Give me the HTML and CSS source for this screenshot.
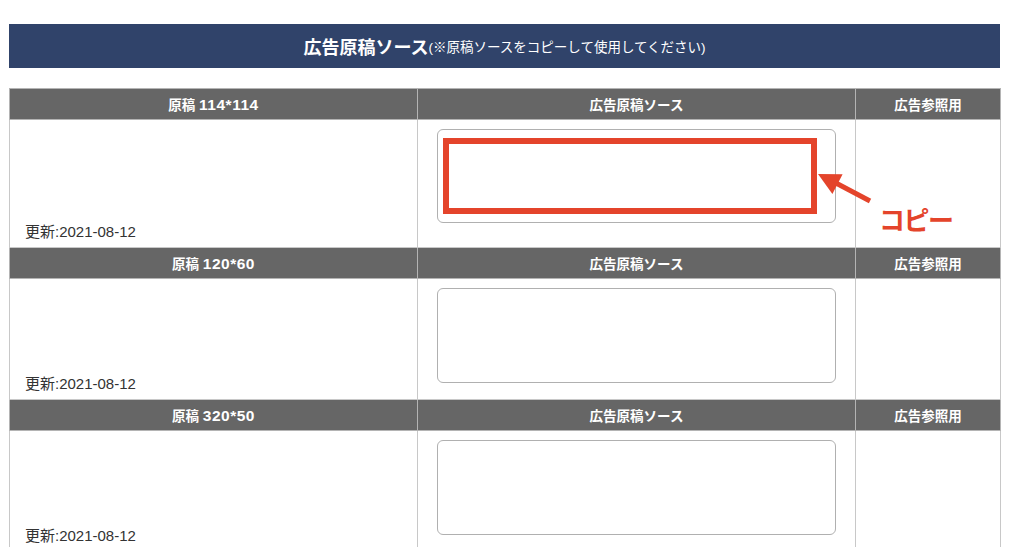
FILE: index.html
```html
<!DOCTYPE html>
<html lang="ja">
<head>
<meta charset="utf-8">
<title>広告原稿ソース</title>
<link rel="stylesheet" href="styles.css">
</head>
<body>
<div class="page">
  <div class="banner">
    <span class="banner-title">広告原稿ソース</span><span class="banner-sub">(※原稿ソースをコピーして使用してください)</span>
  </div>

  <table class="sheet">
    <colgroup>
      <col class="c1"><col class="c2"><col class="c3">
    </colgroup>
    <tr class="head">
      <th>原稿 <span class="num">114*114</span></th><th>広告原稿ソース</th><th>広告参照用</th>
    </tr>
    <tr class="body r1">
      <td class="date">更新:2021-08-12</td>
      <td class="src"><div class="box"><div class="mark"></div></div></td>
      <td class="ref"></td>
    </tr>
    <tr class="head">
      <th>原稿 <span class="num">120*60</span></th><th>広告原稿ソース</th><th>広告参照用</th>
    </tr>
    <tr class="body r2">
      <td class="date">更新:2021-08-12</td>
      <td class="src"><div class="box"></div></td>
      <td class="ref"></td>
    </tr>
    <tr class="head">
      <th>原稿 <span class="num">320*50</span></th><th>広告原稿ソース</th><th>広告参照用</th>
    </tr>
    <tr class="body r3">
      <td class="date">更新:2021-08-12</td>
      <td class="src"><div class="box"></div></td>
      <td class="ref"></td>
    </tr>
  </table>

  <div class="annot">
    <svg class="arrow" width="70" height="50" viewBox="0 0 70 50">
      <line x1="66" y1="38" x2="30" y2="19" stroke="#e4442b" stroke-width="5"/>
      <polygon points="14,11 38.6,11.3 28.4,30.9" fill="#e4442b"/>
    </svg>
    <span class="copy">コピー</span>
  </div>
</div>
</body>
</html>
```

FILE: styles.css
```css
html, body {
  margin: 0;
  padding: 0;
  background: #fff;
}

body {
  font-family: "Liberation Sans", "Noto Sans CJK JP", sans-serif;
  color: #333;
}

.page {
  position: relative;
  width: 1024px;
  height: 547px;
  overflow: hidden;
  padding: 24px 0 0 9px;
  box-sizing: border-box;
}

.banner {
  width: 991px;
  height: 44px;
  background: #30436a;
  color: #fff;
  display: flex;
  align-items: center;
  justify-content: center;
  box-sizing: border-box;
}

.banner-title {
  font-size: 18px;
  font-weight: bold;
}

.banner-sub {
  font-size: 13.5px;
}

.sheet {
  margin-top: 20px;
  width: 991px;
  border-collapse: collapse;
  table-layout: fixed;
}

.c1 { width: 408px; }
.c2 { width: 438px; }
.c3 { width: 145px; }

.sheet th,
.sheet td {
  border: 1px solid #c8c8c8;
  padding: 0;
}

.head th {
  height: 30px;
  background: #666;
  color: #fff;
  font-size: 13.5px;
  font-weight: bold;
  text-align: center;
  vertical-align: middle;
  border-color: #b4b4b4;
}

.num {
  font-size: 15.5px;
  letter-spacing: 0.5px;
}

.r1 td { height: 118px; }
.r2 td { height: 111px; }
.r3 td { height: 111px; }

.date {
  vertical-align: bottom;
  font-size: 15px;
  color: #333;
  padding: 0 0 6px 15px !important;
}

.src {
  vertical-align: top;
  padding: 9px 19px 0 19px !important;
}

.box {
  position: relative;
  height: 94px;
  border: 1px solid #b0b0b0;
  border-radius: 6px;
  box-sizing: border-box;
  background: #fff;
}

.r2 .box,
.r3 .box {
  height: 95px;
}

.mark {
  position: absolute;
  left: 5px;
  top: 8px;
  width: 374px;
  height: 76px;
  border: 6px solid #e4442b;
  box-sizing: border-box;
}

.annot {
  position: absolute;
  left: 804px;
  top: 163px;
  width: 160px;
  height: 80px;
}

.arrow {
  position: absolute;
  left: 0;
  top: 0;
}

.copy {
  position: absolute;
  left: 75px;
  top: 43px;
  font-family: "Noto Sans CJK JP", sans-serif;
  font-size: 26px;
  font-weight: bold;
  line-height: 1;
  color: #e4442b;
  letter-spacing: -1.5px;
}
```
